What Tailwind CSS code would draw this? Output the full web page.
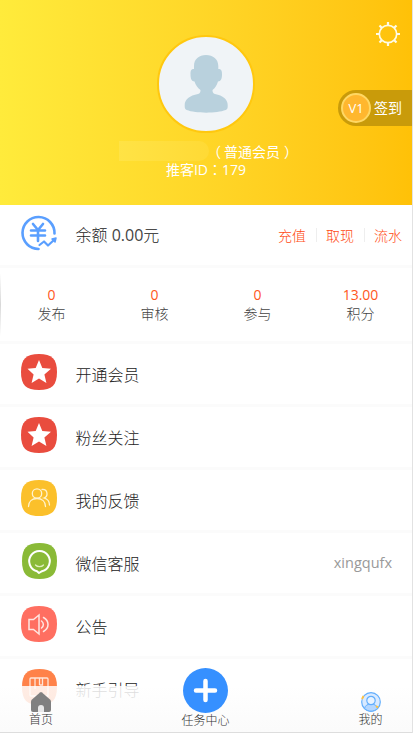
<!DOCTYPE html>
<html lang="zh-CN">
<head>
<meta charset="utf-8">
<meta name="viewport" content="width=device-width, initial-scale=1">
<title>我的</title>
<script src="https://cdn.jsdelivr.net/npm/@tailwindcss/browser@4"></script>
</head>
<body class="h-[733px] overflow-hidden bg-white font-['Open_Sans','Noto_Sans_CJK_SC',sans-serif] font-light text-[#222]">
<div class="relative h-[733px] w-[413px] overflow-hidden border-r border-[#e2e2e2]">
  <header class="relative flex h-[205px] flex-col items-center bg-linear-to-r from-[#ffeb3b] to-[#ffc107] pt-[35px] text-[14px] leading-[18px] font-normal text-white">
    <div class="size-[98px] rounded-full border-2 border-[#ffc80f] bg-[#f0f4f7]">
      <svg viewBox="0 0 94 94" class="size-full" fill="#b9d1dd"><path d="M35 32V29C35 22 40 18 47 18s12.300 4 12.300 11v3c3 0 3.700 1.500 3.700 5.500 0 4-1 7-4 7-1.200 4-3 6.500-5.500 8.500 0 2 .5 3.500 2.500 4C64 58.500 68.700 62.500 68.700 68c0 3 0 4-2 5-9 3.500-30 3.500-39 0-2-1-2-2-2-5 0-5.500 5-9.500 13.300-11 2-.5 2.500-2 2.500-4-2.500-2-4.800-4.500-6-8.500-3 0-4-3-4-7 0-4 .5-5.500 3.500-5.500z"/></svg>
    </div>
    <div class="mt-[9px] flex w-[174px] items-center justify-between">
      <div class="h-[20px] w-[90px] -translate-y-px rounded-r-full bg-linear-to-r from-[#ffe345] to-[#ffda35]"></div>
      <div class="mr-[-8px] w-[91px] whitespace-nowrap"><span class="inline-block -translate-x-[3px]">（</span>普通会员<span class="inline-block translate-x-[4px]">）</span></div>
    </div>
    <div class="-mt-px font-['Open_Sans','Noto_Sans_CJK_TC',sans-serif]" lang="zh-TW">推客ID：179</div>
    <svg viewBox="0 0 24 24" class="absolute left-[376px] top-[22px] size-6" fill="none" stroke="#fffbe5" stroke-width="1.700"><circle cx="12" cy="12" r="8.700"/><path stroke-width="2.200" d="M12 0v3.500M12 20.500V24M0 12h3.500M20.500 12H24M3.500 3.500l2.500 2.500M18 18l2.500 2.500M20.500 3.500L18 6M6 18l-2.500 2.500"/></svg>
    <div class="absolute right-0 top-[90px] flex h-9 w-[74px] items-center rounded-l-full bg-[#c99b0a] pl-[3px]">
      <div class="flex size-[30px] items-center justify-center rounded-full border-2 border-[#ffd863] bg-[#ffb72e] text-[13px]">V1</div>
      <span class="ml-[3px]">签到</span>
    </div>
  </header>

  <section class="flex h-[63px] border-b-3 border-[#fbfbfb] pl-[21px]">
    <svg viewBox="0 0 36 36" class="mt-[10px] size-9 shrink-0" fill="none" stroke="#5a9fff" stroke-width="2.600" stroke-linecap="round" stroke-linejoin="round"><path d="M33.500 18.500A16 16 0 1 0 17.500 34"/><path d="M12 9l5 6 5-6M17 15v11M10 15.500h14M10 20.500h14"/><path stroke-width="2.200" d="M18.500 30l4.500-3.500 4 4 6.500-6"/><path fill="#5a9fff" stroke-width="1.500" d="M35 23l-1 4-3-3z"/></svg>
    <div class="ml-[18.500px] flex-1 text-[16px] leading-[61px]">余额 <span class="font-normal text-[#444]">0.00</span>元</div>
    <div class="mr-[10px] flex items-center text-[14px] text-[#ff4a12]">
      <span>充值</span><i class="mx-[9.500px] h-[14px] w-px bg-[#eee]"></i><span>取现</span><i class="mx-[9.500px] h-[14px] w-px bg-[#eee]"></i><span>流水</span>
    </div>
  </section>

  <section class="relative grid h-[76px] grid-cols-4 border-b-3 border-[#fbfbfb] pt-[17px] text-center text-[14px] leading-[19px] text-[#444]">
    <i class="absolute left-0 top-[5px] h-[63px] w-px bg-linear-to-b from-white via-[#d8d8d8] to-white"></i>
    <div><b class="block font-normal text-[#ff5722]">0</b>发布</div>
    <div><b class="block font-normal text-[#ff5722]">0</b>审核</div>
    <div><b class="block font-normal text-[#ff5722]">0</b>参与</div>
    <div><b class="block font-normal text-[#ff5722]">13.00</b>积分</div>
  </section>

  <main class="text-[16px] leading-[62px]">
    <div class="flex h-[63px] border-b-3 border-[#fbfbfb] pl-[21px]">
      <svg viewBox="0 0 36 36" class="mt-[10px] mr-[18.500px] size-9"><path fill="#e94c3e" d="M18 0C31 0 36 5 36 18s-5 18-18 18S0 31 0 18 5 0 18 0z"/><path fill="#fff" d="M18 6l3.300 8 8.700.7-6.600 5.700 2 8.600-7.400-4.600-7.400 4.600 2-8.600L6.500 14.700l8.200-.7z"/></svg>开通会员
    </div>
    <div class="flex h-[63px] border-b-3 border-[#fbfbfb] pl-[21px]">
      <svg viewBox="0 0 36 36" class="mt-[10px] mr-[18.500px] size-9"><path fill="#e94c3e" d="M18 0C31 0 36 5 36 18s-5 18-18 18S0 31 0 18 5 0 18 0z"/><path fill="#fff" d="M18 6l3.300 8 8.700.7-6.600 5.700 2 8.600-7.400-4.600-7.400 4.600 2-8.600L6.500 14.700l8.200-.7z"/></svg>粉丝关注
    </div>
    <div class="flex h-[63px] border-b-3 border-[#fbfbfb] pl-[21px]">
      <svg viewBox="0 0 36 36" class="mt-[10px] mr-[18.500px] size-9"><path fill="#fbc02b" d="M18 0C31 0 36 5 36 18s-5 18-18 18S0 31 0 18 5 0 18 0z"/><g fill="none" stroke="#fff3cf" stroke-width="1.300" stroke-linecap="round"><circle cx="16" cy="13.500" r="4.700"/><path d="M7.500 26.500c0-5 3.500-8 8.500-8s8.500 3 8.500 8M21 9.500c6-.5 6.500 7 2 8.500 3.500 1 5.500 3.500 5.500 7"/></g></svg>我的反馈
    </div>
    <div class="flex h-[63px] border-b-3 border-[#fbfbfb] pl-[21px]">
      <svg viewBox="0 0 36 36" class="mt-[10px] mr-[18.500px] size-9"><path fill="#8aba37" d="M18.500 0C31 0 36 5 36 18s-5 18-17.500 18S1 31 1 18 6 0 18.500 0z"/><g fill="none" stroke="#fff" stroke-linecap="round"><path stroke-width="2" stroke-linejoin="round" d="M16 28.200A10.300 10.300 0 1 1 21 28.200L18 30z"/><path stroke="#e0efbe" stroke-width="1.300" d="M14.500 22c2 2.200 6 2.200 8 0"/></g></svg>微信客服
      <span class="ml-auto mr-[20px] text-[14.500px] leading-[60px] font-normal text-[#999]">xingqufx</span>
    </div>
    <div class="flex h-[63px] border-b-3 border-[#fbfbfb] pl-[21px]">
      <svg viewBox="0 0 36 36" class="mt-[10px] mr-[18.500px] size-9"><path fill="#ff6f61" d="M18 0C31 0 36 5 36 18s-5 18-18 18S0 31 0 18 5 0 18 0z"/><g fill="none" stroke="#ffe6e1" stroke-width="1.500"><path d="M8 13.500h4.500L18 9v19l-5.500-4.500H8z"/><path stroke-linecap="round" d="M20.500 15c2.500 2 2.500 5 0 7M22.500 11.500c6 3.500 6 10.500 0 14"/></g></svg>公告
    </div>
    <div class="flex h-[63px] pl-[21px]">
      <svg viewBox="0 0 36 36" class="mt-[10px] mr-[18.500px] size-9"><path fill="#ff8249" d="M18.500 0C31 0 36 5 36 18s-5 18-17.500 18S1 31 1 18 6 0 18.500 0z"/><path fill="none" stroke="#ffe5d8" stroke-width="1.300" d="M10 9h16q1 0 1 1v17H10q-1 0-1-1V10q0-1 1-1zM14 9v11M18.500 9v7M18.500 16h3V9"/></svg>新手引导
    </div>
  </main>

  <nav class="absolute inset-x-0 bottom-0 flex h-[47px] border-b border-[#ddd] bg-linear-to-b from-white/85 to-[#fafafa]/85 text-[12px] leading-[16px] text-[#333]">
    <div class="flex w-[82px] flex-col items-center pt-[6px]">
      <svg viewBox="0 0 20 20" class="h-5 w-5 shrink-0"><path fill="#808080" d="M9 .5q1-.8 2 0l8 7q1 1 1 2V18q0 2-2 2H2q-2 0-2-2V9.500q0-1 1-2z"/><path fill="#e8e8e8" d="M7 20v-4q0-3 3-3t3 3v4z"/></svg>
      <span>首页</span>
    </div>
    <div class="flex w-[247px] flex-col items-center pt-[27px]">
      <svg viewBox="0 0 45 45" class="-mt-[45px] h-[45px] w-[45px] shrink-0"><circle cx="22.500" cy="22.500" r="22.500" fill="#3690ff"/><path d="M22.500 13v19M13 22.500h19" stroke="#fff" stroke-width="4.500" stroke-linecap="round"/></svg>
      <span>任务中心</span>
    </div>
    <div class="flex w-[83px] flex-col items-center pt-[6px]">
      <svg viewBox="0 0 20 20" class="h-5 w-5 shrink-0"><circle cx="10" cy="10" r="9.300" fill="#d9eaff" stroke="#62aefc" stroke-width="1.200"/><path d="M3.500 16.500c.5-3 3-4.500 6.500-4.500s6 1.500 6.500 4.500c-4 3.500-9 3.500-13 0z" fill="#b5d7ff" stroke="#62aefc"/><circle cx="10" cy="8.500" r="4.200" fill="#e8f3ff" stroke="#62aefc" stroke-width="1.200"/><path d="M1 7l1.500-3M15 14l2 1.500" stroke="#ffc13d" stroke-width="1.800"/></svg>
      <span>我的</span>
    </div>
  </nav>
</div>
</body>
</html>
